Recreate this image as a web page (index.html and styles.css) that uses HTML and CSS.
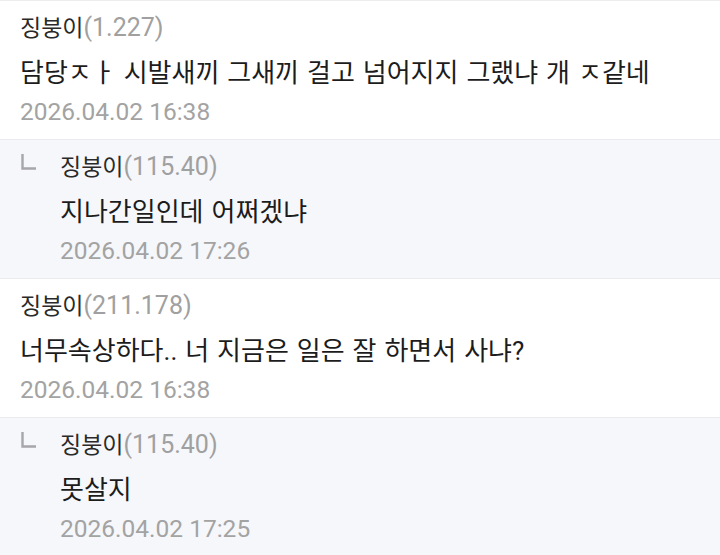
FILE: index.html
```html
<!DOCTYPE html>
<html lang="ko">
<head>
<meta charset="utf-8">
<link rel="stylesheet" href="styles.css">
</head>
<body>
<div class="list">
  <div class="item">
    <div class="body">
      <div class="name">징붕이<span class="ip">(1.227)</span></div>
      <div class="text">담당ㅈㅏ 시발새끼 그새끼 걸고 넘어지지 그랬냐 개 ㅈ같네</div>
      <div class="date">2026.04.02 16:38</div>
    </div>
  </div>
  <div class="item reply">
    <div class="mark"><svg width="16" height="16" viewBox="0 0 16 16"><path d="M1.5 0 V14.5 H15" fill="none" stroke="#a6a6ab" stroke-width="2.4"/></svg></div>
    <div class="body">
      <div class="name">징붕이<span class="ip">(115.40)</span></div>
      <div class="text">지나간일인데 어쩌겠냐</div>
      <div class="date">2026.04.02 17:26</div>
    </div>
  </div>
  <div class="item">
    <div class="body">
      <div class="name">징붕이<span class="ip">(211.178)</span></div>
      <div class="text">너무속상하다.. 너 지금은 일은 잘 하면서 사냐?</div>
      <div class="date">2026.04.02 16:38</div>
    </div>
  </div>
  <div class="item reply">
    <div class="mark"><svg width="16" height="16" viewBox="0 0 16 16"><path d="M1.5 0 V14.5 H15" fill="none" stroke="#a6a6ab" stroke-width="2.4"/></svg></div>
    <div class="body">
      <div class="name">징붕이<span class="ip">(115.40)</span></div>
      <div class="text">못살지</div>
      <div class="date">2026.04.02 17:25</div>
    </div>
  </div>
</div>
</body>
</html>
```

FILE: styles.css
```css
html, body {
  margin: 0;
  padding: 0;
  background: #ffffff;
}
body {
  font-family: Roboto, "Noto Sans CJK KR", sans-serif;
  width: 720px;
  height: 555px;
  overflow: hidden;
}
.list {
  border-top: 1px solid #ededf0;
}
.item {
  display: flex;
  background: #ffffff;
  border-bottom: 1px solid #ebebef;
  padding: 11px 20px 10px 20px;
  height: 117px;
}
.item.reply {
  background: #f6f7fb;
}
.mark {
  width: 40px;
  flex: none;
  padding-top: 3px;
  padding-left: 1px;
  box-sizing: border-box;
}
.mark svg {
  display: block;
}
.body {
  display: flex;
  flex-direction: column;
}
.name {
  font-size: 23px;
  line-height: 32px;
  color: #2a2a2a;
}
.ip {
  font-size: 25px;
  color: #a0a0a0;
}
.text {
  font-size: 26px;
  line-height: 32px;
  color: #1c1c1c;
  margin-top: 12px;
  word-spacing: 1.5px;
}
.date {
  font-size: 24.5px;
  line-height: 32px;
  color: #a3a3a3;
  margin-top: 7px;
}
```
